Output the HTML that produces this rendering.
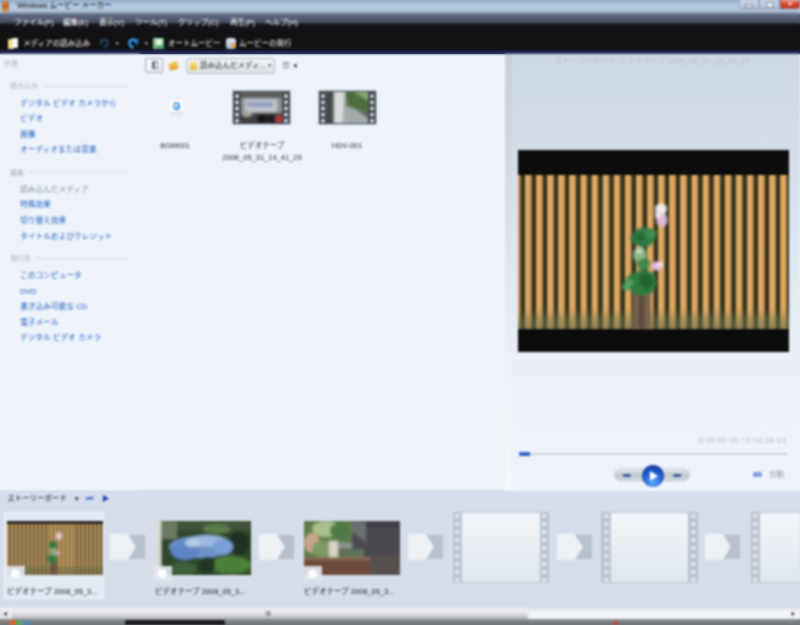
<!DOCTYPE html>
<html><head><meta charset="utf-8">
<style>
html,body{margin:0;padding:0;}
body{width:800px;height:625px;overflow:hidden;position:relative;background:linear-gradient(#a9bedb 0 13.5px,#50586c 13.5px 24px,#121214 24px 49.5px,#1b2046 49.5px 53.5px,#eef3fa 53.5px 490.5px,#d4dde9 490.5px 608px,#e0e1e4 608px 619px,#7a7d82 619px);font-family:"Liberation Sans","Noto Sans CJK JP",sans-serif;font-size:7.5px;line-height:10px;color:#333;}
.abs{position:absolute;}
#wrap{position:absolute;left:0;top:0;width:800px;height:625px;overflow:hidden;filter:blur(0.8px);}
#title{left:0;top:0;width:800px;height:14px;background:linear-gradient(#7f93ad 0,#a4bbd8 2px,#b9cde5 8px,#aebfda 11px,#8d9bb5 13px,#6a7690 14px);}
#title span{position:absolute;left:17px;top:1px;font-size:7.5px;color:#111;white-space:nowrap;}
#menu{left:0;top:14px;width:800px;height:18px;background:linear-gradient(#646f87 0,#525a6e 5px,#434a5b 8.5px,#15161a 10.5px,#121214 18px);}
#menu span{position:absolute;top:3.5px;font-size:7.5px;color:#f4f6fa;white-space:nowrap;}
#tool{left:0;top:32px;width:800px;height:20px;background:#121214;}
#tool span{position:absolute;top:7px;font-size:7.5px;color:#f2f2f2;white-space:nowrap;}
#toolline{left:0;top:49px;width:800px;height:4.5px;background:linear-gradient(#0c0c10,#1b2046 40%,#222a58 80%,#5a668c);}
#left{left:0;top:53.5px;width:140px;height:436px;background:#eef3fa;}
.hd{position:absolute;left:10px;margin-top:1px;font-size:7px;color:#b0b6c0;white-space:nowrap;}
.hl{position:absolute;height:1px;background:#d3dbe6;}
.lk{position:absolute;left:20px;margin-top:1px;font-size:7.7px;color:#2566c8;white-space:nowrap;}
.lk.g{color:#8a939f;}
#right{left:504.5px;top:53.5px;width:296px;height:437px;background:linear-gradient(#ced8e5,#d3dce8 20%,#dfe6f0 45%,#ecf1f8 75%,#f0f4fa);}
#rsep{left:505px;top:54px;width:7px;height:436px;background:linear-gradient(rgba(90,105,130,.07),rgba(120,135,160,.02) 50%,rgba(255,255,255,.35));z-index:2}
#story{left:0;top:490.5px;width:800px;height:119px;background:#d4dde9;}
#sbar{left:0;top:608px;width:800px;height:11px;background:#eef1f6;}
#task{left:0;top:619px;width:800px;height:6px;background:linear-gradient(#8f9296,#6c6f74);}
.lbl{position:absolute;font-size:7.5px;color:#30343a;white-space:nowrap;text-align:center;}

.film{position:absolute;width:57px;height:33px;background:#474c52;box-shadow:0 0 0 1px rgba(150,175,205,.55);}
.film .pl,.film .pr{position:absolute;top:1.5px;width:4px;height:31px;background:radial-gradient(circle at 2px 3.1px,#d5dbe2 0 1.5px,rgba(213,219,226,0) 2.2px) 0 0/4px 6.2px repeat-y;}
.film .pl{left:2px}.film .pr{right:2px}
.film .im{position:absolute;left:8px;top:1px;width:41px;height:31px;overflow:hidden}
.clip{position:absolute;top:520.5px;width:96px;height:54px;overflow:hidden}
.star{position:absolute;width:18px;height:14px;background:rgba(226,231,238,.9);}
.star:after{content:"";position:absolute;left:4px;top:3px;width:9px;height:9px;border-radius:5px;background:#fbfcfd}
.cl{position:absolute;top:587px;font-size:7.5px;color:#222;white-space:nowrap}
.tr{position:absolute;top:534px;width:35px;height:26px;}
.empty{position:absolute;top:511.5px;width:96.5px;height:71.5px;background:#bac4d1;overflow:hidden}
.empty i{position:absolute;top:0;width:9.5px;height:72px;background:linear-gradient(#dde3eb,#dde3eb) 2.5px 0/4.5px 100% no-repeat;}
.empty i:before{content:"";position:absolute;left:0;top:0;width:9.5px;height:72px;background:repeating-linear-gradient(#bac4d1 0 2.5px,transparent 2.5px 6.5px,#bac4d1 6.5px 8px)}
.empty b{position:absolute;left:9.5px;top:1px;width:77.5px;height:69.5px;background:linear-gradient(#f2f5f9,#e9eef4 50%,#dee5ed)}
</style></head><body>
<div id="wrap">
<svg width="0" height="0" style="position:absolute"><defs><filter id="bl" x="-20%" y="-20%" width="140%" height="140%"><feGaussianBlur stdDeviation="1.2"/></filter><filter id="bl2" x="-20%" y="-20%" width="140%" height="140%"><feGaussianBlur stdDeviation="0.7"/></filter></defs></svg>
<div id="title" class="abs"><div class="abs" style="left:2px;top:1px;width:7px;height:11px;background:linear-gradient(#d98a48,#b8642c 50%,#e0a060);border-radius:1px"></div><span>Windows ムービー メーカー</span>
<div class="abs" style="left:739px;top:0;width:20px;height:9px;background:linear-gradient(#ccd8e8,#b3c3d9);border:1px solid #98a6bb;border-top:0;box-sizing:border-box;border-radius:0 0 0 3px"><div class="abs" style="left:6px;top:5px;width:6px;height:2px;background:#e6ecf4;outline:1px solid #838ea2"></div></div>
<div class="abs" style="left:759px;top:0;width:20px;height:9px;background:linear-gradient(#ccd8e8,#b3c3d9);border:1px solid #98a6bb;border-top:0;box-sizing:border-box"><div class="abs" style="left:6px;top:2px;width:6px;height:4px;border:1px solid #838ea2;background:#e6ecf4"></div></div>
<div class="abs" style="left:780px;top:0;width:20px;height:9px;background:linear-gradient(#e8907a,#d2452e 50%,#c23a22);border:1px solid #8e5a55;border-top:0;box-sizing:border-box;border-radius:0 0 3px 0;color:#fff;font-size:7px;line-height:8px;text-align:center;font-weight:bold">×</div>
</div>
<div id="menu" class="abs">
<span style="left:14px">ファイル(F)</span><span style="left:63px">編集(E)</span><span style="left:99px">表示(V)</span><span style="left:135px">ツール(T)</span><span style="left:178px">クリップ(C)</span><span style="left:230px">再生(P)</span><span style="left:265px">ヘルプ(H)</span>
</div>
<div id="tool" class="abs">
<div class="abs" style="left:8px;top:7px;width:6px;height:10px;background:#f3dc8a;border-radius:1px"></div><div class="abs" style="left:12px;top:6px;width:6px;height:10px;background:#f4f4f0;border-radius:1px"></div>
<svg class="abs" style="left:99px;top:5px" width="11" height="12" viewBox="0 0 11 12"><path d="M2 5 C3 1.5 8.5 1.5 8.5 6 C8.5 8.5 7 10 5 10.5" stroke="#22405c" stroke-width="2.2" fill="none"/><polygon points="0,2.5 5,4.5 1.5,8" fill="#22405c"/></svg>
<span style="left:115px;top:7px;font-size:4.5px;color:#ccc">▼</span>
<svg class="abs" style="left:127px;top:5px" width="12" height="12" viewBox="0 0 12 12"><path d="M9.5 5 C8.5 1.5 2.5 1.5 2.5 6 C2.5 8.5 4 10 6.5 10.5" stroke="#2f9be8" stroke-width="2.6" fill="none"/><polygon points="12,2 6.5,4.5 10.5,8.5" fill="#1f78d8"/></svg>
<span style="left:144px;top:7px;font-size:4.5px;color:#ddd">▼</span>
<div class="abs" style="left:153px;top:6px;width:11px;height:11px;background:linear-gradient(135deg,#9ad09a,#4a9a5a);border-radius:1px"><div class="abs" style="left:3px;top:1px;width:6px;height:6px;background:#e9f1ea"></div></div>
<div class="abs" style="left:226px;top:6px;width:10px;height:11px;background:linear-gradient(#dfeaf6,#9fb8d8);border-radius:3px"><div class="abs" style="left:5px;top:5px;width:5px;height:5px;border-radius:3px;background:#e9a040"></div></div>
<span style="left:23px">メディアの読み込み</span><span style="left:168px">オートムービー</span><span style="left:239px">ムービーの発行</span>
</div>
<div id="toolline" class="abs"></div>
<div id="left" class="abs">
<span class="hd" style="left:4px;top:4px">作業</span>
<span class="hd" style="top:26.5px">読み込み</span><div class="hl" style="left:44px;top:32px;width:84px"></div>
<span class="lk" style="top:44px">デジタル ビデオ カメラから</span>
<span class="lk" style="top:59.5px">ビデオ</span>
<span class="lk" style="top:75px">画像</span>
<span class="lk" style="top:90.5px">オーディオまたは音楽</span>
<span class="hd" style="top:113px">編集</span><div class="hl" style="left:29px;top:118px;width:99px"></div>
<span class="lk g" style="top:130px">読み込んだメディア</span>
<span class="lk" style="top:145.5px">特殊効果</span>
<span class="lk" style="top:161px">切り替え効果</span>
<span class="lk" style="top:177px">タイトルおよびクレジット</span>
<span class="hd" style="top:199px">発行先</span><div class="hl" style="left:36px;top:204px;width:92px"></div>
<span class="lk" style="top:216.5px">このコンピュータ</span>
<span class="lk" style="top:232px">DVD</span>
<span class="lk" style="top:247.5px">書き込み可能な CD</span>
<span class="lk" style="top:263px">電子メール</span>
<span class="lk" style="top:278.5px">デジタル ビデオ カメラ</span>
</div>
<div id="rsep" class="abs"></div>
<div id="right" class="abs"></div>
<!-- collection toolbar -->
<div class="abs" style="left:145px;top:57.5px;width:18px;height:15.5px;border:1.5px solid #a3abb7;background:linear-gradient(#fafbfd,#e6eaf0);border-radius:2px;box-sizing:border-box"><div class="abs" style="left:5.5px;top:2.5px;width:6px;height:7.5px;border:1px solid #7a8494;background:linear-gradient(90deg,#5a6474 0 2.5px,#fff 2.5px);box-sizing:border-box"></div></div>
<div class="abs" style="left:169px;top:62px;width:9px;height:7.5px;background:linear-gradient(#f3c860,#e0a030);border-radius:2px;transform:rotate(-18deg)"></div>
<div class="abs" style="left:185.5px;top:58px;width:89px;height:15.5px;border:1px solid #b4bcc6;border-radius:3px;background:linear-gradient(#f1f3f6,#dde1e7);box-sizing:border-box"><div class="abs" style="left:3.5px;top:3px;width:6.5px;height:8px;background:linear-gradient(#f6e37a,#e3bc3a);border-radius:1px"></div><span class="abs" style="left:13.5px;top:2px;font-size:7.5px;color:#222;white-space:nowrap">読み込んだメディ...</span><span class="abs" style="left:81px;top:2px;font-size:4.5px;color:#222">▼</span></div>
<div class="abs" style="left:282.5px;top:62px;width:6px;height:7px;background:repeating-linear-gradient(#7b8aa5 0 1px,#dfe5ee 1px 2.3px)"></div><span class="abs" style="left:292.5px;top:61px;font-size:6px;color:#111">▼</span>
<!-- media -->
<div class="abs" style="left:169.5px;top:100px;width:13px;height:16px;background:linear-gradient(#ffffff 0 11px,#e3e6ec 11px);border-radius:1px;box-shadow:0 0 1px #b8c0cc"><div class="abs" style="left:3px;top:2px;width:7px;height:8px;border-radius:4px;background:radial-gradient(circle at 40% 40%,#7cc4f4,#2c7ed0)"></div><div class="abs" style="left:5px;top:4px;width:2.5px;height:4px;border-radius:1px;background:#eef6fd"></div></div>
<div class="film" style="left:233px;top:91px"><div class="pl"></div><div class="pr"></div><div class="im"><svg width="41" height="31"><g filter="url(#bl)"><rect x="-2" y="-2" width="45" height="35" fill="#8d9294"/><rect x="-2" y="-2" width="45" height="8" fill="#5c5d5a"/><rect x="4" y="7" width="32" height="13" fill="#c2c7cc"/><rect x="6" y="10" width="26" height="5" fill="#8c9cc0"/><rect x="-2" y="21" width="45" height="12" fill="#3c3d40"/><ellipse cx="21" cy="27" rx="5" ry="5" fill="#141416"/><ellipse cx="30" cy="27" rx="4" ry="5" fill="#1a1a1c"/><ellipse cx="38" cy="27" rx="3" ry="4" fill="#c8303a"/><ellipse cx="6" cy="22" rx="5" ry="3" fill="#a8a49c"/></g></svg></div></div>
<div class="film" style="left:319px;top:91px"><div class="pl"></div><div class="pr"></div><div class="im"><svg width="41" height="31"><g filter="url(#bl)"><rect x="-2" y="-2" width="45" height="35" fill="#8e9692"/><rect x="-2" y="-2" width="9" height="35" fill="#45484a"/><polygon points="7,-2 18,-2 16,33 7,33" fill="#d9dcda"/><polygon points="18,-2 43,-2 43,22 20,14" fill="#4f6e3e"/><polygon points="24,-2 43,-2 43,10" fill="#87a86c"/><polygon points="16,33 19,14 43,24 43,33" fill="#a4aaac"/><polygon points="30,18 43,22 43,28" fill="#5a5f58"/></g></svg></div></div>
<span class="lbl" style="left:145px;width:60px;top:141px">BGM001</span>
<span class="lbl" style="left:212px;width:100px;top:141px">ビデオテープ</span>
<span class="lbl" style="left:212px;width:100px;top:153px">2008_05_31_14_41_29</span>
<span class="lbl" style="left:317px;width:60px;top:141px">HDV-001</span>
<!-- preview -->
<span class="abs" style="left:554px;top:56px;font-size:7.5px;letter-spacing:.15px;color:#b8c0cc;white-space:nowrap">ストーリーボード: ビデオテープ 2008_05_31_14_41_29</span>
<div class="abs" style="left:518px;top:150px;width:270.5px;height:202px;background:#0d0d0d;overflow:hidden">
 <div class="abs" style="left:-3.75px;top:24.5px;width:280px;height:154px;background:repeating-linear-gradient(90deg,#c9924e 0,#dfa964 1.5px,#e2ae6a 3.2px,#d6a05a 4.8px,#b5824a 6.2px,#38381f 6.9px,#2e301d 10.4px,#8a6a3c 11.1px)"></div>
 <div class="abs" style="left:0;top:158px;width:271px;height:21px;background:linear-gradient(rgba(110,120,80,0),rgba(110,120,80,.5) 60%,rgba(100,105,75,.6))"></div>
 <svg class="abs" style="left:90px;top:40px" width="80" height="140" viewBox="608 190 80 140">
  <g filter="url(#bl)">
   <rect x="632.5" y="292" width="18" height="37" fill="#75604e"/>
   <rect x="639" y="292" width="5" height="37" fill="#5c4a3c"/>
   <path d="M641 296 L642 230" stroke="#3c6a3a" stroke-width="2.5" fill="none"/>
   <polygon points="630,238 637,229 646,227 657,231 655,240 648,247 638,246 633,243" fill="#2f7a45"/>
   <polygon points="633,238 640,232 646,236 642,243" fill="#256a3a"/>
   <polygon points="646,230 657,231 654,239 647,238" fill="#3f8e52"/>
   <ellipse cx="640" cy="255" rx="7" ry="8" fill="#8cb686"/>
   <ellipse cx="639" cy="251" rx="3" ry="3" fill="#c9dcc2"/>
   <polygon points="636,262 644,258 651,262 648,269 639,270" fill="#3d8a4c"/>
   <polygon points="622,287 627,277 635,272 646,270 655,274 657,284 652,293 642,296 634,294 629,288 625,292" fill="#2f7a40"/>
   <polygon points="622,288 628,278 634,282 628,290" fill="#52a462"/>
   <polygon points="640,274 650,274 654,284 646,290 640,284" fill="#24632f"/>
   <ellipse cx="661" cy="209" rx="6" ry="5.5" fill="#f3efea"/>
   <ellipse cx="662" cy="220" rx="5.5" ry="7" fill="#e0b9dc"/>
   <ellipse cx="658" cy="215" rx="3" ry="4" fill="#f0e2ee"/>
   <ellipse cx="657" cy="266" rx="6" ry="4.5" fill="#e3bce0"/>
   <ellipse cx="660" cy="264" rx="3" ry="2.5" fill="#f3e6f2"/>
  </g>
 </svg>
</div>
<span class="abs" style="right:14px;top:436px;font-size:7.5px;letter-spacing:0.45px;color:#b4bcc8;white-space:nowrap">0:00:00.00 / 0:00:28.83</span>
<div class="abs" style="left:519px;top:452.5px;width:268px;height:2px;background:#cbd2db"></div>
<div class="abs" style="left:519px;top:452px;width:11px;height:4px;background:#2c62c4;border-radius:1px"></div>
<div class="abs" style="left:614px;top:468px;width:76px;height:14px;border-radius:7px;background:linear-gradient(#e3e7ec,#c3c9d1 50%,#d5dae1);border:1px solid #cfd5dd;box-sizing:border-box"></div>
<div class="abs" style="left:623px;top:473.5px;width:8px;height:3px;background:#3f5fae;border-radius:1px"></div>
<div class="abs" style="left:672.5px;top:473.5px;width:8px;height:3px;background:#3f5fae;border-radius:1px"></div>
<div class="abs" style="left:641.5px;top:464.5px;width:22px;height:22px;border-radius:11px;background:radial-gradient(circle at 50% 80%,#5aa8ff,#1d54c8 55%,#0b2f8a)"></div>
<div class="abs" style="left:649.5px;top:470.5px;width:0;height:0;border-left:8px solid #fff;border-top:5px solid transparent;border-bottom:5px solid transparent"></div>
<div class="abs" style="left:753px;top:472px;width:9px;height:4.5px;background:#7fa2e2;border-radius:1px"></div>
<span class="abs" style="left:769px;top:470px;font-size:7.5px;color:#8b94a2;white-space:nowrap">分割</span>

<div id="story" class="abs">
<span class="abs" style="left:7px;top:3.5px;font-size:7.5px;color:#223;white-space:nowrap">ストーリーボード</span>
<span class="abs" style="left:73.5px;top:3.5px;font-size:6.5px;color:#333">▼</span>
<span class="abs" style="left:86px;top:3px;font-size:7.5px;color:#1d44b8">⏮</span>
<span class="abs" style="left:102px;top:3px;font-size:7.5px;color:#1d44b8">▶</span>
</div>
<div class="abs" style="left:4px;top:511.5px;width:100px;height:87.5px;background:#e1e9f3;border:1px solid #eef3f9;box-sizing:border-box"></div>
<div class="clip" style="left:7px"><div class="abs" style="left:0;top:0;width:96px;height:54px;background:repeating-linear-gradient(90deg,#b8935a 0 2.3px,#70603f 2.3px 3.95px)"></div><div class="abs" style="left:0;top:0;width:96px;height:3px;background:#2a2622"></div><div class="abs" style="left:0;top:46px;width:96px;height:8px;background:rgba(90,100,70,.4)"></div>
<svg class="abs" style="left:0;top:0" width="96" height="54"><g filter="url(#bl)"><rect x="43" y="40" width="7" height="14" fill="#6b5440"/><ellipse cx="46" cy="24" rx="4" ry="4" fill="#2f7a45"/><ellipse cx="46" cy="31" rx="3" ry="4" fill="#7fb080"/><ellipse cx="45" cy="38" rx="5" ry="4" fill="#2f7a40"/><ellipse cx="52" cy="15" rx="2.5" ry="4" fill="#ecd8ea"/><ellipse cx="51" cy="32" rx="2" ry="2" fill="#e0b6dc"/></g></svg></div>
<div class="clip" style="left:155px;background:#2c4428"><svg class="abs" style="left:0;top:0" width="96" height="54"><g filter="url(#bl)"><rect x="0" y="0" width="96" height="54" fill="#2f472a"/><rect x="-2" y="-2" width="8" height="58" fill="#d9ddd8"/><rect x="6" y="0" width="16" height="18" fill="#6c7a62"/><rect x="22" y="-2" width="76" height="12" fill="#3f5238"/><ellipse cx="62" cy="8" rx="14" ry="5" fill="#5c7a4c"/><ellipse cx="84" cy="22" rx="10" ry="12" fill="#1f3320"/><ellipse cx="46" cy="26" rx="32" ry="11" fill="#6f92c9"/><ellipse cx="30" cy="30" rx="14" ry="9" fill="#5f86c4"/><ellipse cx="52" cy="20" rx="20" ry="6" fill="#9db8de"/><ellipse cx="68" cy="26" rx="10" ry="8" fill="#7a9ed6"/><ellipse cx="38" cy="22" rx="8" ry="4" fill="#b7cbe4"/><ellipse cx="76" cy="44" rx="20" ry="9" fill="#4c8038"/><ellipse cx="28" cy="48" rx="14" ry="7" fill="#3d5e3a"/><ellipse cx="52" cy="44" rx="8" ry="8" fill="#223522"/></g></svg></div>
<div class="clip" style="left:304px;background:#55565a"><svg class="abs" style="left:0;top:0" width="96" height="54"><g filter="url(#bl)"><rect x="0" y="0" width="96" height="54" fill="#4b4c52"/><rect x="-2" y="-2" width="50" height="42" fill="#5f7d4c"/><ellipse cx="22" cy="8" rx="14" ry="8" fill="#a9c08e"/><ellipse cx="8" cy="22" rx="8" ry="10" fill="#c9a58e"/><ellipse cx="36" cy="10" rx="10" ry="8" fill="#4e7a46"/><ellipse cx="20" cy="28" rx="12" ry="8" fill="#7d9a62"/><rect x="25" y="20" width="9" height="16" fill="#d8d4c6"/><rect x="34" y="22" width="28" height="5" fill="#8d9490"/><rect x="48" y="-2" width="50" height="40" fill="#4a4a50"/><polygon points="48,0 62,0 62,22 48,10" fill="#6a6e70"/><rect x="62" y="2" width="36" height="4" fill="#3a3a40"/><rect x="36" y="28" width="24" height="10" fill="#5d7258"/><rect x="-2" y="38" width="70" height="18" fill="#6e4a3a"/><rect x="66" y="34" width="32" height="22" fill="#55504e"/><rect x="-2" y="36" width="68" height="3" fill="#8a6a58"/></g></svg></div>
<div class="star" style="left:7px;top:566px"></div><div class="star" style="left:154px;top:566px"></div><div class="star" style="left:304px;top:566px"></div>
<span class="cl" style="left:7px">ビデオテープ 2008_05_3...</span>
<span class="cl" style="left:155px">ビデオテープ 2008_05_3...</span>
<span class="cl" style="left:304px">ビデオテープ 2008_05_3...</span>
<svg class="tr" style="left:110px" viewBox="0 0 36 28" preserveAspectRatio="none"><polygon points="0,0 18,0 26,14 18,28 0,28" fill="#edf1f6"/><polygon points="19,1 36,1 36,27 19,27 27,14" fill="#b7c1ce"/></svg><svg class="tr" style="left:259px" viewBox="0 0 36 28" preserveAspectRatio="none"><polygon points="0,0 18,0 26,14 18,28 0,28" fill="#edf1f6"/><polygon points="19,1 36,1 36,27 19,27 27,14" fill="#b7c1ce"/></svg><svg class="tr" style="left:408px" viewBox="0 0 36 28" preserveAspectRatio="none"><polygon points="0,0 18,0 26,14 18,28 0,28" fill="#edf1f6"/><polygon points="19,1 36,1 36,27 19,27 27,14" fill="#b7c1ce"/></svg><svg class="tr" style="left:557px" viewBox="0 0 36 28" preserveAspectRatio="none"><polygon points="0,0 18,0 26,14 18,28 0,28" fill="#edf1f6"/><polygon points="19,1 36,1 36,27 19,27 27,14" fill="#b7c1ce"/></svg><svg class="tr" style="left:705px" viewBox="0 0 36 28" preserveAspectRatio="none"><polygon points="0,0 18,0 26,14 18,28 0,28" fill="#edf1f6"/><polygon points="19,1 36,1 36,27 19,27 27,14" fill="#b7c1ce"/></svg><div class="empty" style="left:452.5px"><i style="left:0"></i><b></b><i style="right:0"></i></div><div class="empty" style="left:601px"><i style="left:0"></i><b></b><i style="right:0"></i></div><div class="empty" style="left:750.5px"><i style="left:0"></i><b></b><i style="right:0"></i></div>
<div id="sbar" class="abs"><div class="abs" style="left:0;top:0;width:12px;height:11px;background:linear-gradient(#f4f4f6,#dcdde0)"></div><div class="abs" style="left:12px;top:0;width:516px;height:11px;background:linear-gradient(#f0f0f2,#e6e7e9 40%,#c4c6ca 80%,#b4b6ba);border-radius:0 2px 2px 0"></div><div class="abs" style="left:528px;top:0;width:272px;height:11px;background:linear-gradient(#dfe1e5,#f1f2f4 30%,#f4f5f7)"></div><span class="abs" style="left:3px;top:1px;font-size:4.5px;color:#444">◀</span><span class="abs" style="left:791px;top:1px;font-size:4.5px;color:#444">▶</span><div class="abs" style="left:266px;top:3px;width:4px;height:5px;background:repeating-linear-gradient(90deg,#7a7d84 0 1px,transparent 1px 1.5px)"></div></div>
<div id="task" class="abs"><div class="abs" style="left:125px;top:1px;width:100px;height:5px;background:#1c1c1f;border-radius:2px 2px 0 0"></div><div class="abs" style="left:9px;top:1px;width:7px;height:5px;background:#d8642c;border-radius:3px 0 0 0"></div><div class="abs" style="left:16px;top:1px;width:7px;height:5px;background:#5aa86a;border-radius:0 3px 0 0"></div><div class="abs" style="left:24px;top:2px;width:6px;height:4px;background:#4a86c8"></div><div class="abs" style="left:614px;top:2px;width:4px;height:4px;background:#c8453a"></div></div>
</div>
</body></html>
